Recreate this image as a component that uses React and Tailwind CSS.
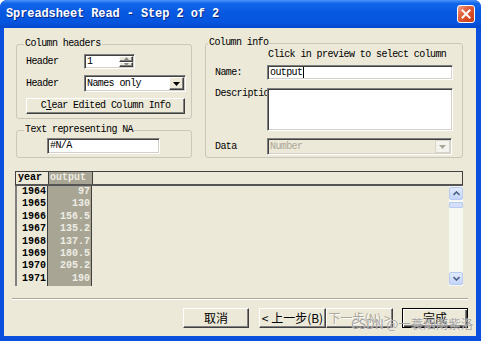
const mono = "font-['Liberation_Mono',monospace] text-[10px] tracking-[-0.6px] text-black leading-[12px]";
const gridFont = "font-['Liberation_Mono',monospace] text-[10px] font-bold leading-[12.4px]";
const cjk = "font-['Noto_Sans_CJK_SC','Noto_Sans',sans-serif] text-[12px] leading-[14px]";
const field = "bg-white border border-t-[#808080] border-l-[#808080] border-b-white border-r-white shadow-[inset_1px_1px_0_#404040,inset_-1px_-1px_0_#d4d0c8]";
const raised = "bg-[#ece9d8] border border-t-white border-l-white border-b-[#404040] border-r-[#404040] shadow-[inset_-1px_-1px_0_#808080]";

function Group({ label, className, legendClass, children }) {
  return (
    <div className={"relative border border-[#c9c7ba] rounded-[3px] " + className}>
      <span className={"absolute top-[-7px] px-[1px] bg-[#ece9d8] " + mono + " " + legendClass}>{label}</span>
      {children}
    </div>
  );
}

function DownTri({ color = "#000" }) {
  return (
    <svg width="7" height="4" viewBox="0 0 7 4">
      <path d="M0 0h7L3.5 4z" fill={color} />
    </svg>
  );
}

function Combo({ text, w, disabled }) {
  return (
    <div className={"h-[17px] flex items-stretch " + w + " " + field + (disabled ? " !bg-[#ece9d8]" : "")}>
      <span className={"flex-1 pl-[2px] flex items-center " + mono + (disabled ? " !text-[#aca899]" : "")}>{text}</span>
      <div className={"w-[15px] m-[1px] flex items-center justify-center " + (disabled ? "bg-[#f4f3ee] border border-[#d8d6c8]" : raised)}>
        <DownTri color={disabled ? "#aca899" : "#000"} />
      </div>
    </div>
  );
}

function CloseBtn() {
  return (
    <div className="w-[18px] h-[18px] rounded-[3px] border border-white bg-[linear-gradient(135deg,#f0a38b_0%,#e3633f_35%,#d44a22_70%,#c1401c_100%)] flex items-center justify-center">
      <svg width="10" height="10" viewBox="0 0 10 10">
        <path d="M1.5 1.5L8.5 8.5M8.5 1.5L1.5 8.5" stroke="#fff" strokeWidth="2" strokeLinecap="square" />
      </svg>
    </div>
  );
}

const years = [1964, 1965, 1966, 1967, 1968, 1969, 1970, 1971];
const outputs = ["97", "130", "156.5", "135.2", "137.7", "180.5", "205.2", "190"];

function ScrollBtn({ up }) {
  return (
    <div className="h-[13px] rounded-[2px] border border-[#b8cbf3] bg-[linear-gradient(to_bottom,#e2ebfd,#c3d3fb)] flex items-center justify-center">
      <svg width="7" height="5" viewBox="0 0 7 5">
        <path d={up ? "M0.5 4L3.5 1L6.5 4" : "M0.5 1L3.5 4L6.5 1"} stroke="#4d6185" strokeWidth="1.6" fill="none" />
      </svg>
    </div>
  );
}

function Button({ children, w, def, disabled, className = "" }) {
  return (
    <div
      className={
        "h-[20px] flex items-center justify-center " + w + " " + className + " " +
        (def
          ? "bg-[#ece9d8] border border-black shadow-[inset_1px_1px_0_#fff,inset_-1px_-1px_0_#404040,inset_-2px_-2px_0_#808080]"
          : raised)
      }
    >
      <span className={cjk + (disabled ? " text-[#aca899] [text-shadow:1px_1px_0_#fff]" : " text-black")}>{children}</span>
    </div>
  );
}

export default function App() {
  return (
    <div className="w-[481px] h-[341px] bg-white overflow-hidden relative">
      <div className="w-full h-full rounded-t-[7px] bg-[#0a50dc] flex flex-col overflow-hidden">
        <div className="h-[28px] shrink-0 flex items-center justify-between pl-[6px] pr-[6px] bg-[linear-gradient(to_bottom,#4a95f7_0%,#1365ea_12%,#0759e2_45%,#0655df_80%,#0449cc_100%)]">
          <span className="text-white font-bold text-[12px] tracking-[-0.1px] font-['Liberation_Mono',monospace] [text-shadow:1px_1px_0_#0b2a8a]">
            Spreadsheet Read - Step 2 of 2
          </span>
          <CloseBtn />
        </div>
        <div className="flex-1 pl-[4px] pr-[5px] pb-[5px]">
          <div className="bg-[#ece9d8] w-[472px] h-[308px] flex flex-col">
            {/* top section */}
            <div className="flex items-start mt-[15px]">
              <div className="ml-[12px] mt-[1px] w-[176px] flex flex-col">
                <Group label="Column headers" className="h-[75px]" legendClass="left-[7px]">
                  <div className="pt-[9px] pl-[9px] flex flex-col">
                    <div className="flex items-center h-[15px]">
                      <span className={"w-[58px] " + mono}>Header</span>
                      <div className={"w-[51px] h-[15px] flex " + field}>
                        <span className={"flex-1 pl-[2px] flex items-center " + mono}>1</span>
                        <div className="w-[14px] flex flex-col m-[1px]">
                          <div className={"flex-1 flex items-center justify-center " + raised}>
                            <svg width="5" height="3" viewBox="0 0 5 3"><path d="M0 3h5L2.5 0z" fill="#888" /></svg>
                          </div>
                          <div className={"flex-1 flex items-center justify-center " + raised}>
                            <svg width="5" height="3" viewBox="0 0 5 3"><path d="M0 0h5L2.5 3z" fill="#888" /></svg>
                          </div>
                        </div>
                      </div>
                    </div>
                    <div className="flex items-center h-[17px] mt-[6px]">
                      <span className={"w-[58px] " + mono}>Header</span>
                      <Combo text="Names only" w="w-[102px]" />
                    </div>
                    <div className={"mt-[6px] w-[159px] h-[16px] flex items-center justify-center " + raised}>
                      <span className={mono}>
                        C<span className="underline">l</span>ear Edited Column Info
                      </span>
                    </div>
                  </div>
                </Group>
                <Group label="Text representing NA" className="mt-[11px] h-[28px]" legendClass="left-[7px]">
                  <div className="pt-[7px] pl-[30px]">
                    <div className={"w-[113px] h-[16px] flex items-center pl-[2px] " + field}>
                      <span className={mono}>#N/A</span>
                    </div>
                  </div>
                </Group>
              </div>
              <div className="ml-[13px] w-[258px]">
                <Group label="Column info" className="h-[115px]" legendClass="left-[2px]">
                  <div className="flex flex-col pl-[9px]">
                    <span className={"mt-[5px] ml-[53px] " + mono}>Click in preview to select column</span>
                    <div className="mt-[4px] flex items-center h-[15px]">
                      <span className={"w-[52px] " + mono}>Name:</span>
                      <div className={"w-[186px] h-[15px] flex items-center pl-[2px] " + field}>
                        <span className={mono}>output</span>
                        <span className="w-[1px] h-[11px] bg-black ml-[1px]" />
                      </div>
                    </div>
                    <div className="mt-[8px] flex items-start h-[43px]">
                      <span className={"w-[52px] overflow-hidden whitespace-nowrap " + mono}>Description</span>
                      <div className={"w-[186px] h-[43px] " + field} />
                    </div>
                    <div className="mt-[7px] flex items-center h-[17px]">
                      <span className={"w-[52px] " + mono}>Data</span>
                      <Combo text="Number" w="w-[185px]" disabled />
                    </div>
                  </div>
                </Group>
              </div>
            </div>

            {/* grid */}
            <div className="mt-[13px] ml-[11px] w-[448px] h-[115px] flex flex-col">
              <div className="h-[15px] flex border-t border-t-[#404040] border-b-2 border-b-[#555] border-l border-l-[#404040] border-r border-r-[#404040]">
                <div className={"w-[33px] pl-[2px] border-r border-r-[#404040] text-black " + gridFont}>year</div>
                <div className={"w-[44px] pl-[1px] bg-[#a8a594] text-[#eeede4] border-r border-r-[#404040] " + gridFont}>output</div>
                <div className="flex-1" />
              </div>
              <div className="h-[100px] flex">
                <div className="w-[33px] border-l-2 border-l-[#808080] border-r border-r-[#404040] flex flex-col items-end pr-[1px]">
                  {years.map((y) => (
                    <div key={y} className={"h-[12.4px] text-black " + gridFont}>{y}</div>
                  ))}
                </div>
                <div className="w-[44px] bg-[#a8a594] border-r border-r-[#404040] flex flex-col items-end pr-[1px]">
                  {outputs.map((o, i) => (
                    <div key={i} className={"h-[12.4px] text-[#eeede4] " + gridFont}>{o}</div>
                  ))}
                </div>
                <div className="flex-1" />
                <div className="w-[14px] bg-[#f8f8f3] flex flex-col pt-[1px] pb-[1px]">
                  <ScrollBtn up />
                  <div className="h-[6px] mt-[2px] rounded-[1px] border border-[#b8cbf3] bg-[#d4defa]" />
                  <div className="flex-1" />
                  <ScrollBtn />
                </div>
              </div>
            </div>

            {/* separator */}
            <div className="mt-[12px] ml-[8px] w-[456px] h-[2px] border-t border-t-[#aca899] border-b border-b-white" />

            {/* buttons */}
            <div className="mt-[8px] ml-[179px] flex items-center">
              <Button w="w-[66px]">取消</Button>
              <Button w="w-[67px]" className="ml-[10px]">&lt; 上一步(B)</Button>
              <Button w="w-[67px]" disabled>下一步(N) &gt;</Button>
              <Button w="w-[66px]" className="ml-[9px]" def>完成</Button>
            </div>
          </div>
        </div>
      </div>
      <span className="absolute left-[351px] top-[316px] font-['Noto_Sans_CJK_SC','Noto_Sans',sans-serif] text-[12.5px] leading-[16px] text-[#8c8c8c]/80 [text-shadow:0_0_1px_#fff]">
        CSDN @一蓑烟雨紫洛
      </span>
    </div>
  );
}
